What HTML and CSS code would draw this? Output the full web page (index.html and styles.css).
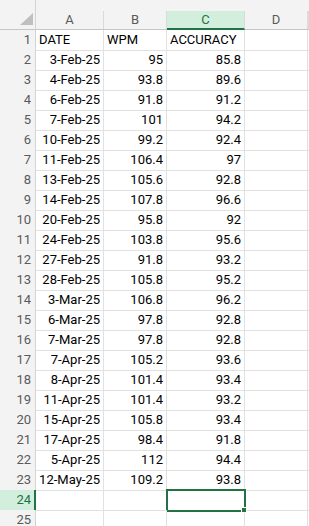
FILE: index.html
```html
<!DOCTYPE html>
<html>
<head>
<meta charset="utf-8">
<link rel="stylesheet" href="styles.css">
</head>
<body>
<div class="sheet">
  <div class="hdr">
    <div class="corner"><span class="tri"></span></div>
    <div class="ch"><span>A</span></div>
    <div class="ch"><span>B</span></div>
    <div class="ch sel"><span>C</span></div>
    <div class="ch"><span>D</span></div>
    <div class="ch"><span></span></div>
  </div>
  <div class="row"><div class="rh">1</div><div class="c">DATE</div><div class="c">WPM</div><div class="c">ACCURACY</div><div class="c"></div><div class="c"></div></div>
  <div class="row"><div class="rh">2</div><div class="c r">3-Feb-25</div><div class="c r">95</div><div class="c r">85.8</div><div class="c"></div><div class="c"></div></div>
  <div class="row"><div class="rh">3</div><div class="c r">4-Feb-25</div><div class="c r">93.8</div><div class="c r">89.6</div><div class="c"></div><div class="c"></div></div>
  <div class="row"><div class="rh">4</div><div class="c r">6-Feb-25</div><div class="c r">91.8</div><div class="c r">91.2</div><div class="c"></div><div class="c"></div></div>
  <div class="row"><div class="rh">5</div><div class="c r">7-Feb-25</div><div class="c r">101</div><div class="c r">94.2</div><div class="c"></div><div class="c"></div></div>
  <div class="row"><div class="rh">6</div><div class="c r">10-Feb-25</div><div class="c r">99.2</div><div class="c r">92.4</div><div class="c"></div><div class="c"></div></div>
  <div class="row"><div class="rh">7</div><div class="c r">11-Feb-25</div><div class="c r">106.4</div><div class="c r">97</div><div class="c"></div><div class="c"></div></div>
  <div class="row"><div class="rh">8</div><div class="c r">13-Feb-25</div><div class="c r">105.6</div><div class="c r">92.8</div><div class="c"></div><div class="c"></div></div>
  <div class="row"><div class="rh">9</div><div class="c r">14-Feb-25</div><div class="c r">107.8</div><div class="c r">96.6</div><div class="c"></div><div class="c"></div></div>
  <div class="row"><div class="rh">10</div><div class="c r">20-Feb-25</div><div class="c r">95.8</div><div class="c r">92</div><div class="c"></div><div class="c"></div></div>
  <div class="row"><div class="rh">11</div><div class="c r">24-Feb-25</div><div class="c r">103.8</div><div class="c r">95.6</div><div class="c"></div><div class="c"></div></div>
  <div class="row"><div class="rh">12</div><div class="c r">27-Feb-25</div><div class="c r">91.8</div><div class="c r">93.2</div><div class="c"></div><div class="c"></div></div>
  <div class="row"><div class="rh">13</div><div class="c r">28-Feb-25</div><div class="c r">105.8</div><div class="c r">95.2</div><div class="c"></div><div class="c"></div></div>
  <div class="row"><div class="rh">14</div><div class="c r">3-Mar-25</div><div class="c r">106.8</div><div class="c r">96.2</div><div class="c"></div><div class="c"></div></div>
  <div class="row"><div class="rh">15</div><div class="c r">6-Mar-25</div><div class="c r">97.8</div><div class="c r">92.8</div><div class="c"></div><div class="c"></div></div>
  <div class="row"><div class="rh">16</div><div class="c r">7-Mar-25</div><div class="c r">97.8</div><div class="c r">92.8</div><div class="c"></div><div class="c"></div></div>
  <div class="row"><div class="rh">17</div><div class="c r">7-Apr-25</div><div class="c r">105.2</div><div class="c r">93.6</div><div class="c"></div><div class="c"></div></div>
  <div class="row"><div class="rh">18</div><div class="c r">8-Apr-25</div><div class="c r">101.4</div><div class="c r">93.4</div><div class="c"></div><div class="c"></div></div>
  <div class="row"><div class="rh">19</div><div class="c r">11-Apr-25</div><div class="c r">101.4</div><div class="c r">93.2</div><div class="c"></div><div class="c"></div></div>
  <div class="row"><div class="rh">20</div><div class="c r">15-Apr-25</div><div class="c r">105.8</div><div class="c r">93.4</div><div class="c"></div><div class="c"></div></div>
  <div class="row"><div class="rh">21</div><div class="c r">17-Apr-25</div><div class="c r">98.4</div><div class="c r">91.8</div><div class="c"></div><div class="c"></div></div>
  <div class="row"><div class="rh">22</div><div class="c r">5-Apr-25</div><div class="c r">112</div><div class="c r">94.4</div><div class="c"></div><div class="c"></div></div>
  <div class="row"><div class="rh">23</div><div class="c r">12-May-25</div><div class="c r">109.2</div><div class="c r">93.8</div><div class="c"></div><div class="c"></div></div>
  <div class="row"><div class="rh sel">24</div><div class="c"></div><div class="c"></div><div class="c active"><span class="handle"></span></div><div class="c"></div><div class="c"></div></div>
  <div class="row"><div class="rh">25</div><div class="c"></div><div class="c"></div><div class="c"></div><div class="c"></div><div class="c"></div></div>
</div>
</body>
</html>
```

FILE: styles.css
```css
html, body {
  margin: 0;
  padding: 0;
  background: #ffffff;
}
body {
  font-family: Roboto, "Liberation Sans", sans-serif;
  font-size: 13px;
  color: #000;
  overflow: hidden;
}
.sheet {
  width: 309px;
  height: 526px;
  overflow: hidden;
}
.hdr, .row {
  display: grid;
  grid-template-columns: 36px 68px 63px 78px 63px 1fr;
}
.hdr {
  background: #f3f3f3;
  height: 30px;
}
.corner {
  position: relative;
  border-right: 1px solid #d4d4d4;
  border-bottom: 1px solid #c6c6c6;
  box-sizing: border-box;
}
.tri {
  position: absolute;
  right: 2px;
  bottom: 4px;
  width: 0;
  height: 0;
  border-left: 13px solid transparent;
  border-bottom: 12px solid #bfbfbf;
}
.ch {
  display: flex;
  flex-direction: column;
  justify-content: flex-end;
  border-bottom: 1px solid #c6c6c6;
  box-sizing: border-box;
}
.ch span {
  display: flex;
  align-items: center;
  justify-content: center;
  height: 18px;
  border-right: 1px solid #dadada;
  color: #5a5a5a;
  padding-bottom: 1px;
  box-sizing: border-box;
}
.ch.sel span {
  background: #d2eedd;
  color: #217346;
  border-bottom: 2px solid #217346;
  margin-bottom: -1px;
  height: 19px;
}
.row {
  height: 20px;
}
.rh {
  background: #f3f3f3;
  border-right: 1px solid #d4d4d4;
  border-bottom: 1px solid #dcdcdc;
  color: #5a5a5a;
  text-align: right;
  padding-right: 4px;
  line-height: 20px;
  box-sizing: border-box;
}
.rh.sel {
  background: #d2eedd;
  color: #217346;
  border-right: 2px solid #217346;
  padding-right: 3px;
}
.c {
  position: relative;
  border-right: 1px solid #e1e1e1;
  border-bottom: 1px solid #e1e1e1;
  padding: 0 3px;
  line-height: 20px;
  white-space: nowrap;
  box-sizing: border-box;
}
.c.r {
  text-align: right;
}
.c.active::before {
  content: "";
  position: absolute;
  left: -1px;
  top: -1px;
  right: -2px;
  bottom: -2px;
  border: 2px solid #217346;
}
.handle {
  position: absolute;
  z-index: 1;
  right: -3px;
  bottom: -3px;
  width: 4px;
  height: 4px;
  background: #217346;
  border: 1px solid #ffffff;
}
```
